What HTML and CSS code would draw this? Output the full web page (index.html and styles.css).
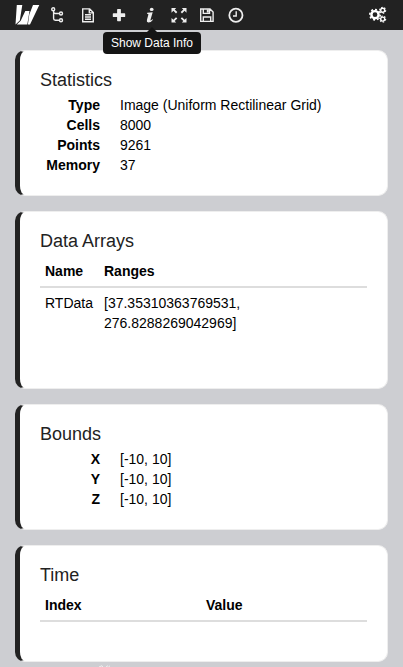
FILE: index.html
```
<!DOCTYPE html>
<html lang="en">
<head>
<meta charset="utf-8">
<title>Data Info</title>
<link rel="stylesheet" href="styles.css">
</head>
<body>
<header class="toolbar">
  <svg class="logo" viewBox="0 0 25 20"><path d="M1.800 0H7.300L4.800 15.500 .5 19.600ZM10.300 6H14.500L12.300 19.600H1.800L5.700 15.800ZM18 0H24.300L15 19.600H12.900L14.300 9.500Z"/></svg>
  <svg class="icon" viewBox="0 0 16 16"><g class="line"><circle cx="4.200" cy="2.300" r="1.500"/><circle cx="12" cy="6.500" r="1.500"/><circle cx="12" cy="13.200" r="1.500"/><path d="M4.600 4V11.500Q4.600 13.200 6.300 13.200H10.300M4.600 5Q4.600 6.500 6.300 6.500H10.300"/></g></svg>
  <svg class="icon" viewBox="0 0 16 16"><path class="line" d="M2.700 1.900H9.700L13.300 5.500V14.700H2.700ZM9.300 1.900V5.900H13.300M5 7.800H11M5 10H11M5 12.200H11"/></svg>
  <svg class="icon" viewBox="0 0 16 16"><path d="M6.800 2H9.300Q9.900 2 9.900 2.600V6.300H13.500Q14.200 6.300 14.200 6.900V9.400Q14.200 10 13.500 10H9.900V13.500Q9.900 14.200 9.300 14.200H6.800Q6.100 14.200 6.100 13.500V10H2.500Q1.800 10 1.800 9.400V6.900Q1.800 6.300 2.500 6.300H6.100V2.600Q6.100 2 6.800 2Z"/></svg>
  <span class="active">
    <svg class="icon" viewBox="0 0 16 16"><ellipse cx="9.700" cy="2.400" rx="1.900" ry="1.700"/><path d="M5.200 5.700 10.700 5.200 8.500 12.800Q8.300 13.700 9.100 13.300L10.600 12.200 11 12.700Q8.900 15.700 6.300 15.600 4.300 15.400 4.900 13.100L6.400 7.600Q6.600 6.700 5 6.700Z"/></svg>
    <span class="tooltip">Show Data Info</span>
  </span>
  <svg class="icon" viewBox="0 0 16 16"><path d="M.5 1H5.200L3.700 2.500 6.300 5.100 5 6.400 2.400 3.800.5 5.700ZM15.500 1V5.700L13.600 3.800 11 6.400 9.700 5.100 12.300 2.500 10.800 1ZM.5 15.600V10.900L2.400 12.800 5 10.200 6.300 11.500 3.700 14.100 5.200 15.600ZM15.500 15.600H10.800L12.300 14.100 9.700 11.500 11 10.200 13.600 12.800 15.500 10.900Z"/></svg>
  <svg class="icon" viewBox="0 0 16 16"><path class="line" d="M1.700 2H11L14.100 5.100V14.400H1.700ZM4.300 2V6.400H10.500V2M4.300 14.400V10H11.700V14.400"/><path d="M7.800 2.400H9.800V5.600H7.800Z"/></svg>
  <svg class="icon" viewBox="0 0 16 16"><circle class="line thick" cx="7.900" cy="8.300" r="6.600"/><path class="line" d="M8.200 4.300V9H5"/></svg>
  <svg class="gears" viewBox="0 0 18 18"><g class="gear"><circle cx="6" cy="8.700" r="3.600"/><circle class="teeth" cx="6" cy="8.700" r="5.200" pathLength="16"/></g><g class="gear small"><circle cx="13.700" cy="4.300" r="2"/><circle class="teeth" cx="13.700" cy="4.300" r="3" pathLength="12"/><circle cx="13.700" cy="13.100" r="2"/><circle class="teeth" cx="13.700" cy="13.100" r="3" pathLength="12"/></g></svg>
</header>
<main class="panel">
  <section class="card statistics">
    <h4>Statistics</h4>
    <dl><dt>Type</dt><dd>Image (Uniform Rectilinear Grid)</dd><dt>Cells</dt><dd>8000</dd><dt>Points</dt><dd>9261</dd><dt>Memory</dt><dd>37</dd></dl>
  </section>
  <section class="card arrays">
    <h4>Data Arrays</h4>
    <table><thead><tr><th class="name">Name</th><th>Ranges</th></tr></thead><tbody><tr><td>RTData</td><td>[37.35310363769531,<br>276.8288269042969]</td></tr></tbody></table>
  </section>
  <section class="card bounds">
    <h4>Bounds</h4>
    <dl><dt>X</dt><dd>[-10, 10]</dd><dt>Y</dt><dd>[-10, 10]</dd><dt>Z</dt><dd>[-10, 10]</dd></dl>
  </section>
  <section class="card time">
    <h4>Time</h4>
    <table><thead><tr><th class="index">Index</th><th>Value</th></tr></thead></table>
  </section>
  <svg class="marker" viewBox="0 0 14 12"><path d="M1 2 4 .7 6 4M12 .7 8.500 4M8 2 10 .7"/></svg>
</main>
</body>
</html>
```

FILE: styles.css
```
* { box-sizing: border-box; }
html { height: 100%; overflow: hidden; }
body {
  margin: 0;
  height: 100%;
  overflow: hidden;
  background: #cdced2;
  color: #000;
  font: 14px/20px "Liberation Sans", Arial, sans-serif;
}
.toolbar {
  display: flex;
  align-items: center;
  height: 30px;
  padding: 0 16px 0 15px;
  background: #222;
}
.toolbar svg { display: block; flex: none; fill: #eee; }
.toolbar .logo { width: 25px; height: 20px; margin-right: 9px; fill: #fff; }
.icon { width: 16px; height: 16px; margin-right: 15px; }
.active { position: relative; margin-right: 12.500px; }
.active .icon { margin-right: 0; }
.active ~ .icon { margin-right: 12.700px; }
.line { fill: none; stroke: #eee; stroke-width: 1.400; }
.toolbar .line { fill: none; }
.line.thick { stroke-width: 1.800; }
.toolbar .gears { width: 18px; height: 18px; margin-left: auto; }
.gear { fill: none; stroke: #fff; stroke-width: 2.400; }
.gear .teeth { stroke-width: 1.600; stroke-dasharray: 1 1; }
.gear.small { stroke-width: 1.400; }
.small .teeth { stroke-width: 1.100; }
.tooltip {
  position: absolute;
  z-index: 2;
  top: 25px;
  left: -39px;
  width: 98px;
  height: 22px;
  border-radius: 4px;
  background: #151515;
  color: #fff;
  font-size: 12px;
  line-height: 22px;
  text-align: center;
  white-space: nowrap;
}
.tooltip::before {
  content: "";
  position: absolute;
  left: 44px;
  bottom: 100%;
  border: 5px solid transparent;
  border-top: 0;
  border-bottom-color: #151515;
}
.panel { padding: 20px 15px 0; }
.card {
  margin-bottom: 15px;
  padding: 19px 20px 0;
  border: 1px solid #eee;
  border-left: 5px solid #222;
  border-radius: 10px;
  background: #fff;
}
.statistics { height: 146px; }
.arrays { height: 178px; }
.bounds { height: 126px; }
.time { height: 117px; }
h4 {
  margin: 0 0 5px;
  color: #222;
  font-size: 18px;
  font-weight: 400;
  line-height: 20px;
}
dl {
  display: grid;
  grid-template-columns: 60px 1fr;
  column-gap: 20px;
  margin: 0;
}
dt { font-weight: 700; text-align: right; }
dd { margin: 0; }
table { width: 100%; border-collapse: collapse; }
th, td { padding: 5px; text-align: left; vertical-align: top; }
th { border-bottom: 2px solid #ddd; }
.name { width: 59px; }
.index { width: 161px; }
.marker {
  display: block;
  width: 14px;
  height: 12px;
  margin: -12px 0 0 83px;
  fill: none;
  stroke: #eee;
}
```
